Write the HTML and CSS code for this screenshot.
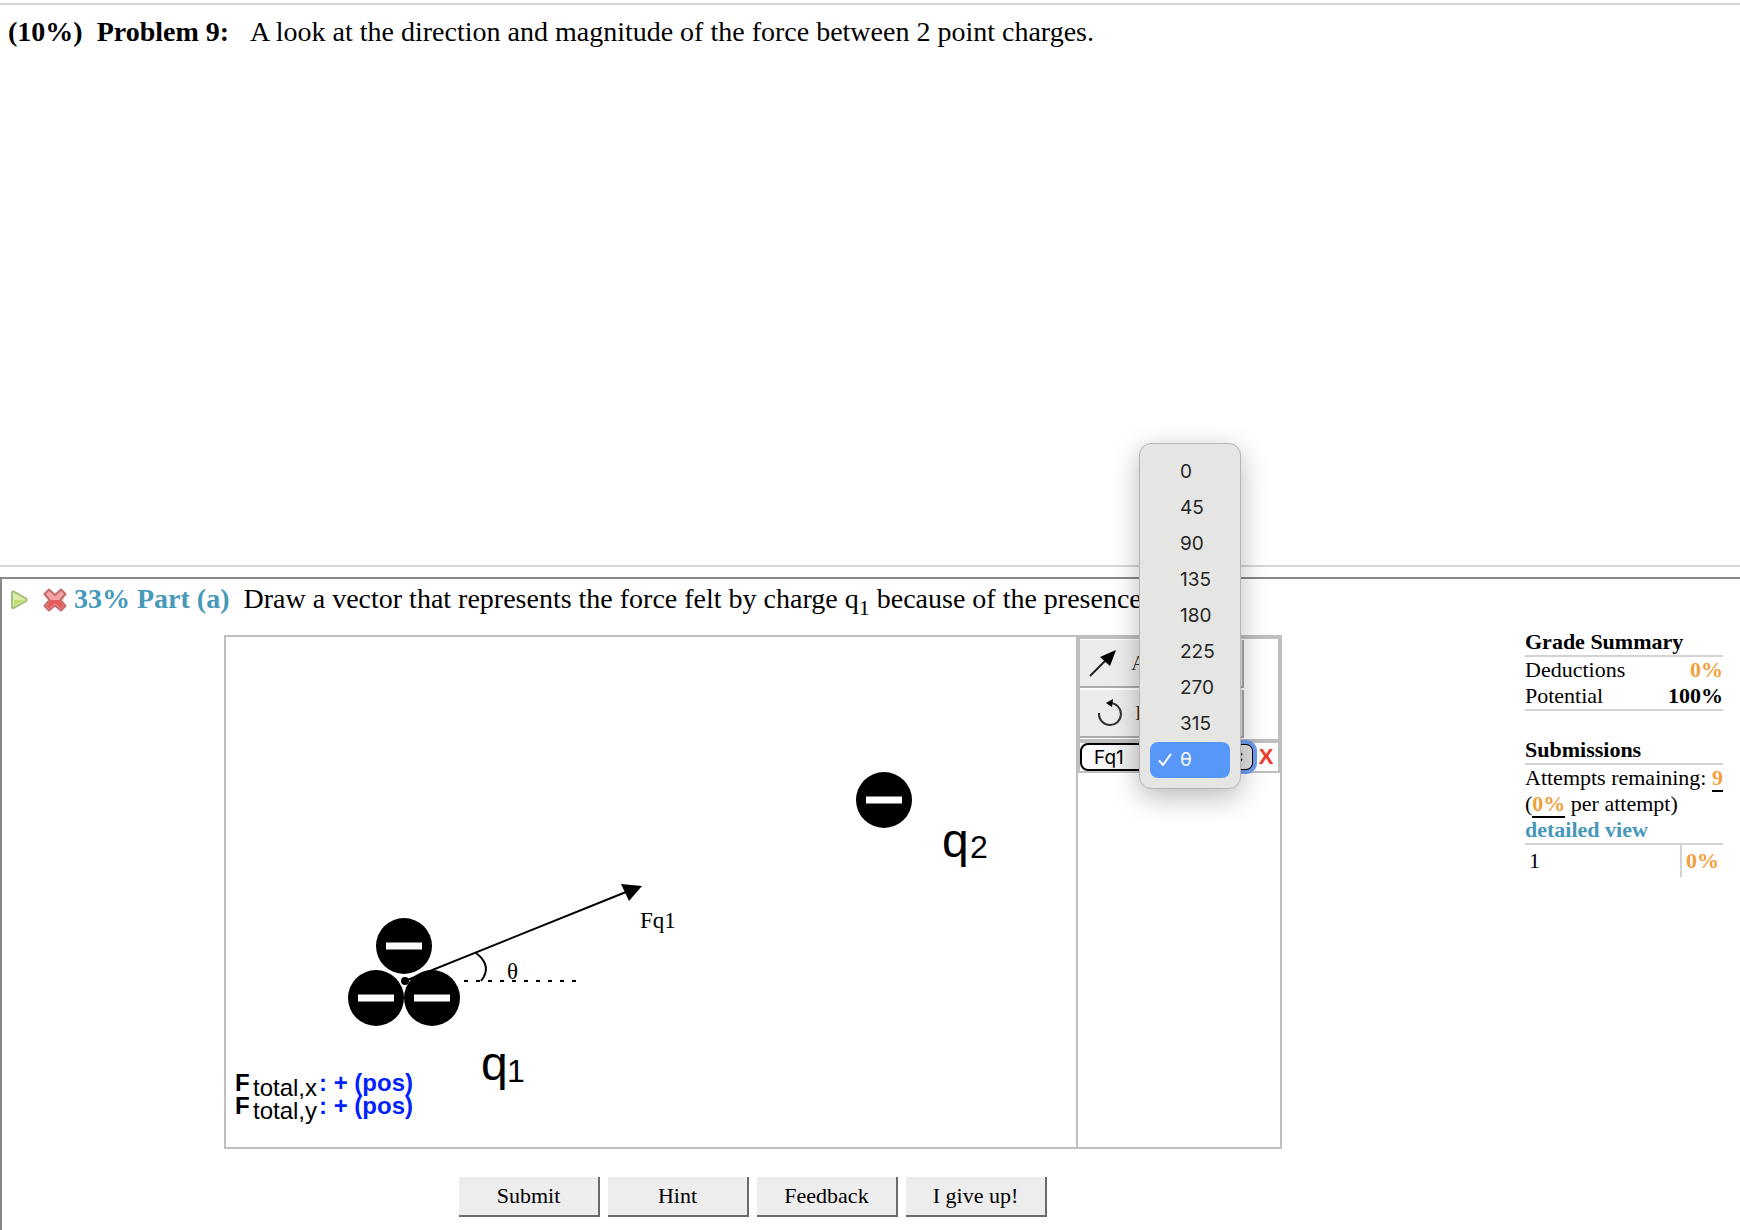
FILE: index.html
```html
<!doctype html>
<html lang="en">
<head>
  <meta charset="utf-8">
  <title>Problem 9</title>
  <link rel="stylesheet" href="styles.css">
</head>
<body>
  <section class="problem">
    <b>(10%)</b>
    <b>Problem 9:</b>
    <span class="statement">A look at the direction and magnitude of the force between 2 point charges.</span>
  </section>

  <section class="part">
    <header class="part-header">
      <svg class="play" width="20" height="22" viewBox="0 0 20 22">
        <path d="M3 4.500 Q3 3 4.500 3.500 L17 10.500 Q18.500 12 17 13.200 L4.500 20 Q3 20.500 3 19 Z" fill="#dcebab" stroke="#a3c07c" stroke-width="2"/>
        <path d="M5 12 H15 L5 17.500 Z" fill="#bfdc6c"/>
      </svg>
      <svg class="wrong" width="24" height="26" viewBox="0 0 24 26">
        <path d="M6 3.500 L12 9 L18 3.500 L22.500 8 L17.500 14 L22.500 20 L18 24.500 L12 19.500 L6 24.500 L1.500 20 L6.500 14 L1.500 8 Z" fill="#f3a3a3" stroke="#c56a6a" stroke-width="2" stroke-linejoin="round"/>
        <path d="M6 14 H18 L16.500 14.500 L20.500 20 L18 22.500 L12 17.500 L6 22.500 L3.500 20 L7.500 14.500 Z" fill="#e55a5a"/>
      </svg>
      <b class="part-name">33% Part (a)</b>
      <span>Draw a vector that represents the force felt by charge q<sub>1</sub> because of the presence</span>
    </header>

    <div class="part-body">
      <main>
        <div class="workspace">
          <svg class="canvas" viewBox="0 0 850 510">
            <defs>
              <g id="charge">
                <circle r="28"/>
                <rect x="-18" y="-3.500" width="36" height="7" fill="#fff"/>
              </g>
            </defs>
            <path d="M179 344 L400 255" class="line"/>
            <use href="#charge" x="178" y="309"/>
            <use href="#charge" x="150" y="361"/>
            <use href="#charge" x="206" y="361"/>
            <use href="#charge" x="658" y="163"/>
            <circle cx="179" cy="344" r="4"/>
            <path d="M416 249 L395 247 L403 264 Z"/>
            <path d="M250 316 Q267 329 255 344" class="line"/>
            <path d="M238 344 H350" class="line dashed"/>
            <text x="281" y="342" class="serif">θ</text>
            <text x="414" y="291" class="serif">Fq1</text>
            <text x="255" y="443" class="name">q</text>
            <text x="281" y="445" class="index">1</text>
            <text x="716" y="220" class="name">q</text>
            <text x="744" y="221" class="index">2</text>
            <g class="total">
              <text x="9" y="454" class="bold">F</text>
              <text x="27" y="459">total,x</text>
              <text x="93" y="454" class="bold sign">: + (pos)</text>
              <text x="9" y="477" class="bold">F</text>
              <text x="27" y="482">total,y</text>
              <text x="93" y="477" class="bold sign">: + (pos)</text>
            </g>
          </svg>

          <div class="toolbox">
            <div class="tools">
              <button type="button" class="tool">
                <svg width="30" height="30" viewBox="0 0 30 30">
                  <path d="M2 28 L18 12" fill="none" stroke="#222" stroke-width="2"/>
                  <path d="M28 2 L12 9 L22 18 Z"/>
                </svg>
                Add
              </button>
              <button type="button" class="tool reset">
                <svg width="26" height="30" viewBox="0 0 26 30">
                  <path d="M2 15 A11 11 0 1 0 13 5" fill="none" stroke="#333" stroke-width="2"/>
                  <path d="M9 5 L16 1 L15 9 Z"/>
                </svg>
                Reset
              </button>
            </div>
            <div class="vector">
              <select class="picker" aria-label="Vector name">
                <option>Fq1</option>
              </select>
              <div class="angle">
                <select class="picker focused" aria-label="Angle">
                  <option>θ</option>
                </select>
                <svg class="chevrons" width="10" height="14" viewBox="0 0 10 14">
                  <path d="M1 5 L5 1 L9 5 M1 9 L5 13 L9 9" fill="none" stroke="#222" stroke-width="2"/>
                </svg>
                <ul class="menu" role="listbox" aria-label="Angle">
                  <li role="option">0</li>
                  <li role="option">45</li>
                  <li role="option">90</li>
                  <li role="option">135</li>
                  <li role="option">180</li>
                  <li role="option">225</li>
                  <li role="option">270</li>
                  <li role="option">315</li>
                  <li role="option" aria-selected="true">
                    <svg width="14" height="14" viewBox="0 0 14 14">
                      <path d="M1.500 8 L5 12 L12.500 1.500" fill="none" stroke="#fff" stroke-width="2" stroke-linecap="round" stroke-linejoin="round"/>
                    </svg>θ
                  </li>
                </ul>
              </div>
              <button type="button" class="remove">X</button>
            </div>
          </div>
        </div>

        <div class="actions">
          <button type="button">Submit</button>
          <button type="button">Hint</button>
          <button type="button">Feedback</button>
          <button type="button">I give up!</button>
        </div>
      </main>

      <aside>
        <h2>Grade Summary</h2>
        <table class="grades">
          <tr><td>Deductions</td><td class="value warn">0%</td></tr>
          <tr><td>Potential</td><td class="value">100%</td></tr>
        </table>
        <h2>Submissions</h2>
        <div>Attempts remaining: <b class="warn underlined">9</b></div>
        <div>(<b class="warn underlined">0%</b> per attempt)</div>
        <a href="#details">detailed view</a>
        <table class="attempts">
          <tr><td>1</td><td class="score warn">0%</td></tr>
        </table>
      </aside>
    </div>
  </section>
</body>
</html>
```
FILE: styles.css
```css
* {
  box-sizing: border-box;
}
body {
  display: flex;
  flex-direction: column;
  min-height: 100vh;
  margin: 0;
  padding-top: 3px;
  background: #fff;
  color: #000;
  font-family: "Liberation Serif", "Times New Roman", serif;
  font-size: 22px;
  line-height: 26px;
}
button {
  font: inherit;
  color: inherit;
}

.problem {
  display: flex;
  gap: 14px;
  min-height: 564px;
  padding: 11px 8px;
  border: solid #d7d7d7;
  border-width: 2px 0;
  font-size: 28px;
  line-height: 32px;
}
.statement {
  margin-left: 7px;
}

.part {
  flex: 1;
  margin-top: 10px;
  border: solid #888;
  border-width: 2px 0 0 2px;
}
.part-header {
  display: flex;
  align-items: center;
  padding: 4px 7px 0;
  font-size: 28px;
  line-height: 32px;
  white-space: nowrap;
}
.play {
  margin-right: 14px;
}
.wrong {
  margin-right: 7px;
}
.part-name {
  margin-right: 14px;
}
.part-name, a {
  color: #4699b8;
}
sub {
  font-size: 22px;
  line-height: 0;
  vertical-align: -7px;
}
.part-body {
  display: flex;
  gap: 21px;
  padding-right: 17px;
}
main {
  flex: 1;
  padding: 20px 0 13px;
}

.workspace {
  display: flex;
  max-width: 1058px;
  margin: 0 auto;
  border: 2px solid #bfbfbf;
}
.canvas {
  flex: 1;
  min-width: 0;
}
.line {
  fill: none;
  stroke: #000;
  stroke-width: 2;
}
.dashed {
  stroke-dasharray: 4 8;
}
.serif {
  font-size: 23px;
}
.name, .index, .total {
  font-family: "Liberation Sans", Arial, sans-serif;
}
.name {
  font-size: 48px;
}
.index {
  font-size: 32px;
}
.total {
  font-size: 24px;
}
.bold {
  font-weight: bold;
}
.sign {
  fill: #0022ff;
}

.toolbox {
  width: 204px;
  border-left: 2px solid #bfbfbf;
}
.tools, .vector {
  border: 2px solid #bfbfbf;
}
.tools {
  display: grid;
  gap: 2px;
  padding: 1px 0;
}
.tool {
  display: flex;
  align-items: center;
  gap: 13px;
  width: 164px;
  height: 48px;
  padding: 0 8px;
  border: solid #aaa;
  border-width: 0 2px 2px 0;
  background: #ececec;
  color: #333;
}
.reset {
  padding-left: 17px;
  gap: 12px;
}
.vector {
  display: flex;
}
.picker {
  width: 86px;
  height: 28px;
  padding: 0 12px;
  border: 2px solid #000;
  border-radius: 8px;
  appearance: none;
  background: linear-gradient(90deg, #fff, #e0e0e0);
  color: #000;
  font: 19px Inter, sans-serif;
}
.focused {
  width: 88px;
  outline: 4px solid #6f9ef0;
  outline-offset: -1px;
}
.angle {
  position: relative;
}
.chevrons {
  position: absolute;
  top: 7px;
  right: 11px;
}
.menu {
  position: absolute;
  z-index: 1;
  top: -300px;
  left: -27px;
  width: 102px;
  margin: 0;
  padding: 10px;
  border: 1px solid #b5b5b5;
  border-radius: 12px;
  background: #e5e5e3;
  box-shadow: 0 8px 28px rgba(0, 0, 0, .28);
  color: #262626;
  font: 19px/36px Inter, sans-serif;
  list-style: none;
}
.menu li {
  display: flex;
  align-items: center;
  height: 36px;
  padding-left: 30px;
}
.menu [aria-selected] {
  gap: 8px;
  padding-left: 8px;
  border-radius: 8px;
  background: #5797f8;
  color: #fff;
}
.remove {
  flex: 1;
  padding: 0;
  border: 0;
  background: none;
  color: #f03a2c;
  font: bold 22px "Liberation Sans", Arial, sans-serif;
  line-height: 26px;
}

.actions {
  display: flex;
  justify-content: center;
  gap: 8px;
  margin-top: 28px;
}
.actions button {
  width: 141px;
  height: 40px;
  border: solid #6b6b6b;
  border-width: 0 2px 2px 0;
  background: #ededed;
}

aside {
  width: 198px;
  padding-top: 14px;
  white-space: nowrap;
}
h2 {
  margin: 0;
  border-bottom: 2px solid #d3d3d3;
  font-size: 22px;
}
table {
  width: 100%;
  border-collapse: collapse;
}
td {
  padding: 0;
}
.grades {
  margin-bottom: 26px;
  border-bottom: 2px solid #d3d3d3;
}
.value {
  font-weight: bold;
  text-align: right;
}
.warn {
  color: #f29f3d;
}
.underlined {
  border-bottom: 2px solid #000;
}
a {
  font-weight: bold;
  text-decoration: none;
}
.attempts {
  border-top: 2px solid #d3d3d3;
  line-height: 32px;
}
.attempts td {
  padding-left: 4px;
}
.score {
  width: 42px;
  border-left: 2px solid #d3d3d3;
  font-weight: bold;
}
```
